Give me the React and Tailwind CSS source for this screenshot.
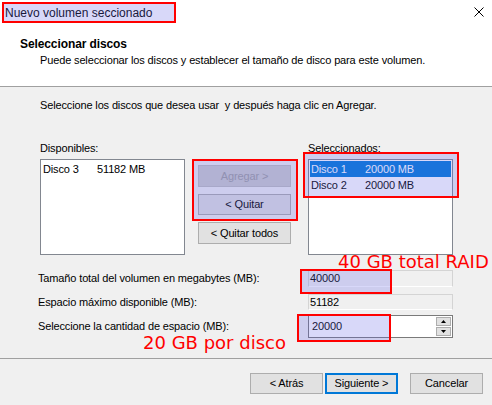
import React from "react";

const font = { fontFamily: '"Liberation Sans", Arial, sans-serif' };

function Btn({ children, className = "", disabled = false }) {
  return (
    <div
      className={
        "flex items-center justify-center border " +
        (disabled
          ? "bg-[#cccccc] border-[#bfbfbf] text-[#a0a0a0] "
          : "bg-[#e1e1e1] border-[#adadad] text-black ") +
        className
      }
    >
      {children}
    </div>
  );
}

function Item({ name, size, selected }) {
  return (
    <div
      className={
        "flex h-[16px] items-center pl-[1px] " +
        (selected ? "bg-[#0078d7] text-white" : "text-black")
      }
    >
      <span className="w-[54px]">{name}</span>
      <span>{size}</span>
    </div>
  );
}

function Box({ className }) {
  return (
    <div
      className={
        "absolute border-2 border-[#ff0000] bg-[rgba(100,100,230,0.25)] " +
        className
      }
    />
  );
}

export default function App() {
  return (
    <div
      className="relative h-[405px] w-[492px] overflow-hidden bg-[#f0f0f0] text-[11px] tracking-[-0.14px] text-black"
      style={font}
    >
      {/* Header area */}
      <div className="h-[87px] border-b border-[#a0a0a0] bg-white">
        <div className="flex h-[26px] items-center justify-between pl-[5px] pr-[8px]">
          <span className="text-[12px] tracking-normal">Nuevo volumen seccionado</span>
          <svg width="10" height="10" viewBox="0 0 10 10" className="mt-[-2px]">
            <path d="M0.5 0.5 L9.5 9.5 M9.5 0.5 L0.5 9.5" stroke="#000" strokeWidth="1" />
          </svg>
        </div>
        <div className="mt-[10px] pl-[20px] text-[12px] font-bold leading-[16px] tracking-[-0.1px]">
          Seleccionar discos
        </div>
        <div className="pl-[40px] leading-[16px]">
          Puede seleccionar los discos y establecer el tamaño de disco para este volumen.
        </div>
      </div>

      {/* Body */}
      <div className="pl-[40px] pt-[10px]">
        <div className="leading-[16px]">
          Seleccione los discos que desea usar&nbsp; y después haga clic en Agregar.
        </div>

        <div className="mt-[27px] flex">
          <div className="w-[145px]">
            <div className="leading-[16px]">Disponibles:</div>
            <div className="mt-[3px] h-[96px] border border-[#828790] bg-white p-[1px]">
              <Item name="Disco 3" size="51182 MB" />
            </div>
          </div>
          <div className="ml-[13px] mt-[25px] flex w-[93px] flex-col gap-[7px]">
            <Btn disabled className="h-[22px]">Agregar &gt;</Btn>
            <Btn className="h-[21px]">&lt; Quitar</Btn>
            <Btn className="h-[22px]">&lt; Quitar todos</Btn>
          </div>
          <div className="ml-[17px] w-[145px]">
            <div className="leading-[16px]">Seleccionados:</div>
            <div className="mt-[3px] h-[96px] border border-[#828790] bg-white p-[1px]">
              <Item name="Disco 1" size="20000 MB" selected />
              <Item name="Disco 2" size="20000 MB" />
            </div>
          </div>
        </div>

        <div className="mt-[15px] flex flex-col">
          <div className="flex h-[17px] items-center">
            <span className="ml-[-2px] w-[270px]">Tamaño total del volumen en megabytes (MB):</span>
            <div className="flex h-[17px] w-[145px] items-center border border-[#d4d4d4] border-b-white bg-[#f0f0f0] pl-[1px]">
              40000
            </div>
          </div>
          <div className="mt-[7px] flex h-[16px] items-center">
            <span className="ml-[-2px] w-[270px]">Espacio máximo disponible (MB):</span>
            <div className="flex h-[16px] w-[145px] items-center border border-[#d4d4d4] border-b-white bg-[#f0f0f0] pl-[1px]">
              51182
            </div>
          </div>
          <div className="mt-[5px] flex h-[23px] items-center">
            <span className="ml-[-2px] w-[270px]">Seleccione la cantidad de espacio (MB):</span>
            <div className="flex h-[23px] w-[145px] border border-[#7a7a7a] bg-white">
              <div className="flex flex-1 items-center pl-[3px]">20000</div>
              <div className="flex w-[17px] flex-col gap-[1px] bg-white p-[1px]">
                <div className="flex flex-1 items-center justify-center border border-[#adadad] bg-[#e1e1e1]">
                  <svg width="5" height="3" viewBox="0 0 5 3"><path d="M2.5 0 L5 3 L0 3 Z" fill="#000" /></svg>
                </div>
                <div className="flex flex-1 items-center justify-center border border-[#adadad] bg-[#e1e1e1]">
                  <svg width="5" height="3" viewBox="0 0 5 3"><path d="M0 0 L5 0 L2.5 3 Z" fill="#000" /></svg>
                </div>
              </div>
            </div>
          </div>
        </div>
      </div>

      {/* Footer */}
      <div className="mt-[20px] border-t border-[#a0a0a0]">
        <div className="flex pl-[250px] pt-[14px]">
          <Btn className="h-[21px] w-[73px]">&lt; Atrás</Btn>
          <Btn className="ml-[2px] h-[21px] w-[73px] !border-2 !border-[#0078d7]">Siguiente &gt;</Btn>
          <Btn className="ml-[12px] h-[21px] w-[73px]">Cancelar</Btn>
        </div>
      </div>

      {/* Annotations */}
      <Box className="left-[2px] top-[2px] h-[21px] w-[174px]" />
      <Box className="left-[192px] top-[159px] h-[62px] w-[106px]" />
      <Box className="left-[303px] top-[152px] h-[46px] w-[156px]" />
      <Box className="left-[300px] top-[269px] h-[25px] w-[92px]" />
      <Box className="left-[297px] top-[314px] h-[28px] w-[94px]" />
      <div
        className="absolute left-[338px] top-[253px] whitespace-nowrap text-[18px] leading-[18px] tracking-normal text-[#ff0000]"
        style={{ fontFamily: '"DejaVu Sans", sans-serif' }}
      >
        40 GB total RAID
      </div>
      <div
        className="absolute left-[143px] top-[334px] whitespace-nowrap text-[18px] leading-[18px] tracking-normal text-[#ff0000]"
        style={{ fontFamily: '"DejaVu Sans", sans-serif' }}
      >
        20 GB por disco
      </div>
    </div>
  );
}
